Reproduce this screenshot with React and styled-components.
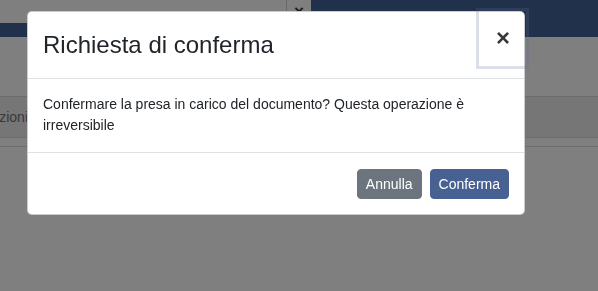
import styled, { createGlobalStyle } from 'styled-components'

const GlobalStyle = createGlobalStyle`
  html, body {
    margin: 0;
    padding: 0;
    background: #fff;
    overflow: hidden;
  }
  body {
    font-family: "Liberation Sans", Arial, sans-serif;
    color: #212529;
  }
`

const Page = styled.div`
  width: 598px;
  height: 291px;
  background: #fff;
`

const TopStrip = styled.div`
  display: flex;
  height: 23px;
`

const SearchField = styled.div`
  width: 286px;
  background: #fff;
`

const ClearButton = styled.div`
  width: 24px;
  border-left: 1px solid #d0d0d0;
  display: flex;
  align-items: center;
  justify-content: center;
  font-size: 17px;
  font-weight: 700;
  color: #2b3a55;
`

const NavFill = styled.div`
  flex: 1;
  background: #446296;
`

const NavBar = styled.div`
  height: 14px;
  background: #446296;
`

const Content = styled.div`
  padding-top: 59px;
`

const HeadRow = styled.div`
  display: flex;
  align-items: center;
  height: 40px;
  background: #ececec;
  border-top: 1px solid #dadada;
  border-bottom: 1px solid #dadada;
`

const HeadCell = styled.div`
  width: 28px;
  display: flex;
  justify-content: flex-end;
  overflow: hidden;
  white-space: nowrap;
  font-size: 14px;
  color: #6c757d;
`

const SpacerRow = styled.div`
  height: 8px;
  border-bottom: 1px solid #dadada;
`

const Backdrop = styled.div`
  position: fixed;
  inset: 0;
  background: rgba(0, 0, 0, 0.5);
`

const ModalLayer = styled.div`
  position: fixed;
  inset: 0;
  padding: 11px 0 0 27px;
`

const Dialog = styled.div`
  width: 496px;
  background: #fff;
  border: 1px solid rgba(0, 0, 0, 0.2);
  border-radius: 5px;
`

const Header = styled.div`
  display: flex;
  align-items: flex-start;
  padding: 15px;
  border-bottom: 1px solid #dee2e6;
`

const Title = styled.h4`
  margin: 0;
  font-size: 24px;
  font-weight: 500;
  line-height: 36px;
  color: #212529;
`

const CloseButton = styled.button`
  margin: -16px -17px -16px auto;
  padding: 15px 16px 16px 17px;
  background: transparent;
  border: none;
  font-family: "Liberation Sans", Arial, sans-serif;
  font-size: 24px;
  font-weight: 700;
  line-height: 24px;
  color: rgba(0, 0, 0, 0.78);
  box-shadow: 0 0 0 3px rgba(85, 110, 150, 0.22);
  cursor: pointer;
`

const Body = styled.div`
  padding: 15px 15px 16px;
  font-size: 14px;
  line-height: 21px;
  color: #212529;
`

const Footer = styled.div`
  display: flex;
  justify-content: flex-end;
  gap: 8px;
  padding: 16px 15px 15px;
  border-top: 1px solid #dee2e6;
`

const Button = styled.button`
  padding: 4px 8px;
  border: 1px solid ${({ $bg }) => $bg};
  border-radius: 4px;
  background: ${({ $bg }) => $bg};
  color: #fff;
  font-family: "Liberation Sans", Arial, sans-serif;
  font-size: 14px;
  line-height: 20px;
  cursor: pointer;
`

const App = () => {
  return (
    <>
      <GlobalStyle />
      <Page>
        <TopStrip>
          <SearchField />
          <ClearButton>×</ClearButton>
          <NavFill />
        </TopStrip>
        <NavBar />
        <Content>
          <HeadRow>
            <HeadCell>Operazioni</HeadCell>
          </HeadRow>
          <SpacerRow />
        </Content>
      </Page>
      <Backdrop />
      <ModalLayer>
        <Dialog>
          <Header>
            <Title>Richiesta di conferma</Title>
            <CloseButton>×</CloseButton>
          </Header>
          <Body>
            Confermare la presa in carico del documento? Questa operazione è irreversibile
          </Body>
          <Footer>
            <Button $bg="#6c757d">Annulla</Button>
            <Button $bg="#476192">Conferma</Button>
          </Footer>
        </Dialog>
      </ModalLayer>
    </>
  )
}

export default App
